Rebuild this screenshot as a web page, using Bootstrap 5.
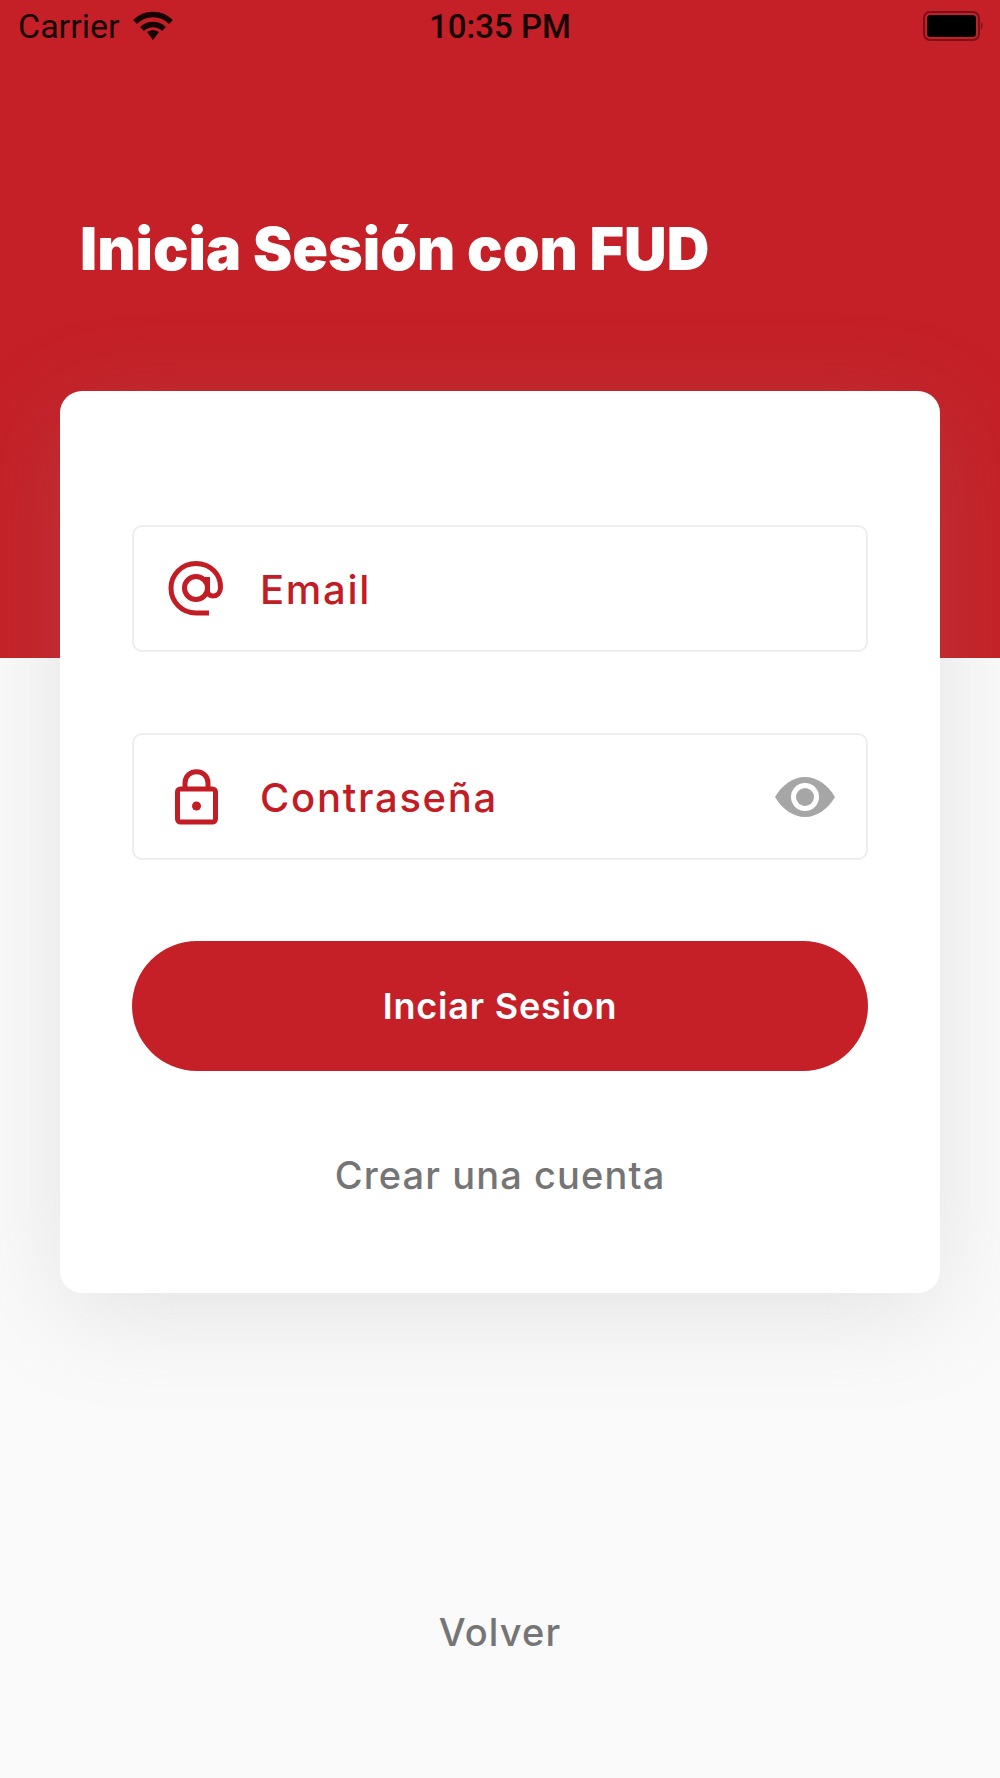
<!DOCTYPE html>
<html lang="es">
<head>
  <meta charset="UTF-8" />
  <title>Inicia Sesión con FUD</title>
  <link href="https://cdn.jsdelivr.net/npm/bootstrap@5.3.0/dist/css/bootstrap.min.css" rel="stylesheet">
  <style>
    body {
      height: 1778px;
      overflow: hidden;
      font-family: "Inter", "Liberation Sans", sans-serif;
      background: linear-gradient(#c52027 0, #c52027 658px, #fafafa 658px);
    }
    .status-bar { height: 52px; padding: 0 17px 0 18px; font-family: "Roboto", "Liberation Sans", sans-serif; font-size: 33px; font-weight: 500; color: #160405; }
    .status-carrier { font-size: 34px; font-weight: 400; }
    .status-time { position: absolute; left: 0; right: 0; top: 7px; text-align: center; line-height: 40px; }
    .login-title { margin: 169px 0 0 80px; height: 56px; font-size: 59px; line-height: 56px; font-weight: 900; letter-spacing: 0; color: #fff; }
    .login-card { width: 880px; height: 902px; margin: 114px auto 0; padding: 134px 72px 0; border-radius: 22px; background: #fff; box-shadow: 0 20px 100px rgba(140, 140, 140, .2); }
    .login-field { height: 127px; padding: 0 31px 0 34px; margin-bottom: 81px; border: 2.500px solid #eeeeee; border-radius: 10px; font-size: 40px; font-weight: 500; letter-spacing: 1.7px; color: #c21c25; }
    .field-label { position: relative; top: 1px; }
    .field-icon { width: 56px; margin-right: 36px; flex-shrink: 0; }
    .login-btn { height: 130px; border: 0; border-radius: 65px; background: #c52027; color: #fff; font-size: 36px; font-weight: 600; letter-spacing: .8px; }
    .login-btn:hover { background: #c52027; color: #fff; }
    .muted-link { font-size: 38px; font-weight: 500; letter-spacing: 1.1px; color: #757575; }
    .create-link { margin-top: 80px; line-height: 48px; }
    .back-link { margin-top: 315px; line-height: 48px; }
  </style>
</head>
<body>
  <!-- Status bar -->
  <div class="status-bar position-relative d-flex align-items-center justify-content-between">
    <div class="d-flex align-items-center gap-2">
      <span class="status-carrier">Carrier</span>
      <svg class="ms-1" width="42" height="30" viewBox="0 0 42 30" fill="none" stroke="#160405" stroke-width="5.500">
        <path d="M3 11C13 1 29 1 39 11" />
        <path d="M10 18C16 12 26 12 32 18" />
        <path d="M15 21C18.500 18.500 23.500 18.500 27 21L21 29Z" fill="#160405" stroke="none" />
      </svg>
    </div>
    <div class="status-time">10:35 PM</div>
    <svg width="60" height="30" viewBox="0 0 60 30">
      <rect x="1" y="1" width="55" height="28" rx="6" fill="none" stroke="#7a1116" stroke-width="2" />
      <rect x="4" y="4" width="49" height="22" rx="3.500" fill="#000" />
      <path d="M58 11C60 12 60 18 58 19Z" fill="#7a1116" />
    </svg>
  </div>

  <h1 class="login-title">Inicia Sesión con FUD</h1>

  <!-- Login card -->
  <div class="login-card">
    <div class="login-field d-flex align-items-center">
      <svg class="field-icon" height="56" viewBox="0 0 56 56" fill="none" stroke="#c21c25" stroke-width="5" stroke-linecap="butt">
        <circle cx="28" cy="27" r="11.500" />
        <path d="M39.500 16V30C39.500 37 52 37 52.500 27C53 13 42 2.500 28 2.500C14 2.500 3 13.500 3 27C3 41 14 52 28 52H41" />
      </svg>
      <span class="field-label">Email</span>
    </div>
    <div class="login-field d-flex align-items-center">
      <svg class="field-icon" height="56" viewBox="0 0 56 56" fill="none" stroke="#c21c25" stroke-width="5">
        <rect x="9.500" y="20" width="38" height="33" rx="3" />
        <path d="M17 20V14C17 -1 40 -1 40 14V20" />
        <circle cx="28.500" cy="37" r="4.500" fill="#c21c25" stroke="none" />
      </svg>
      <span class="field-label">Contraseña</span>
      <svg class="ms-auto" width="60" height="40" viewBox="0 0 60 40">
        <path d="M0 20C7 8 18 0 30 0C42 0 53 8 60 20C53 32 42 40 30 40C18 40 7 32 0 20Z" fill="#a6a6a6" />
        <circle cx="30" cy="20" r="14" fill="#fff" />
        <circle cx="30" cy="20" r="9" fill="#a6a6a6" />
      </svg>
    </div>
    <button class="login-btn btn w-100 d-block">Inciar Sesion</button>
    <div class="muted-link create-link text-center">Crear una cuenta</div>
  </div>

  <div class="muted-link back-link text-center">Volver</div>

  <script src="https://cdn.jsdelivr.net/npm/bootstrap@5.3.0/dist/js/bootstrap.bundle.min.js"></script>
</body>
</html>
